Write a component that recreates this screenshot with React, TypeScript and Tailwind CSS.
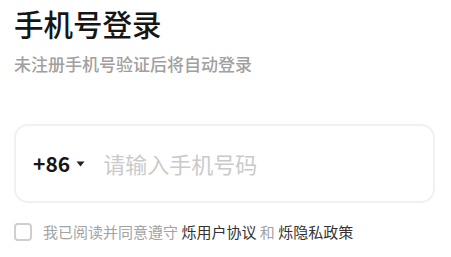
export default function App() {
  return (
    <div
      className="min-h-screen w-full bg-white px-[14px] pt-[3px]"
      style={{ fontFamily: '"Noto Sans CJK SC", "Noto Sans", sans-serif' }}
    >
      <h1 className="text-[29.5px] font-medium leading-[40px] text-[#161616]">手机号登录</h1>
      <p className="mt-[8px] text-[17px] font-medium leading-[26px] text-[#a0a0a0]">未注册手机号验证后将自动登录</p>

      <div className="mt-[47px] flex h-[79px] w-[421px] items-center rounded-[14px] border-2 border-[#f1f1f1] pl-[17px]">
        <button className="flex items-center gap-[6px] text-[21px] font-bold text-[#161616]">
          +86
          <svg width="9" height="6" viewBox="0 0 9 6" className="mt-[1px]">
            <path d="M0.5 0.5h8L4.5 5.5z" fill="#222" />
          </svg>
        </button>
        <input
          className="ml-[18px] w-[260px] bg-transparent text-[22px] text-[#222] outline-none placeholder:text-[#cacaca]"
          placeholder="请输入手机号码"
        />
      </div>

      <label className="mt-[18px] flex items-center gap-[11px] text-[15px] leading-[22px]">
        <span className="h-[18px] w-[18px] rounded-[4px] border-2 border-[#cfcfcf]" />
        <span className="text-[#a3a3a3]">
          我已阅读并同意遵守 <span className="text-[#333]">烁用户协议</span> 和{" "}
          <span className="text-[#333]">烁隐私政策</span>
        </span>
      </label>
    </div>
  );
}
